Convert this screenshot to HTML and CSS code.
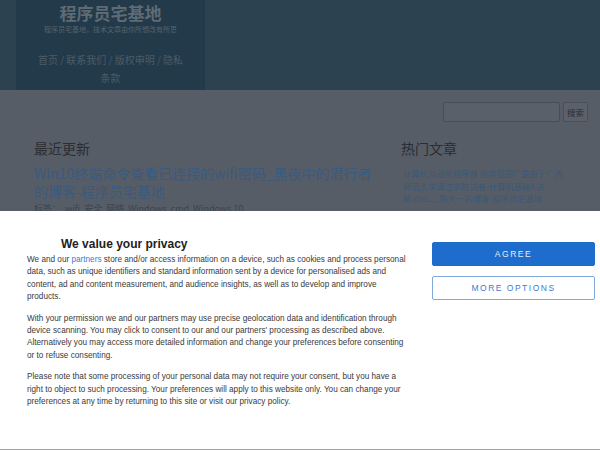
FILE: index.html
```html
<!DOCTYPE html>
<html lang="zh">
<head>
<meta charset="utf-8">
<title>程序员宅基地</title>
<link rel="stylesheet" href="styles.css">
</head>
<body>
<header class="site-header">
  <div class="brand-box">
    <div class="site-title">程序员宅基地</div>
    <div class="site-desc">程序员宅基地，技术文章由你所想改有所思</div>
    <nav class="site-nav">首页 / 联系我们 / 版权申明 / 隐私条款</nav>
  </div>
</header>
<div class="search-row">
  <input class="search-input" type="text">
  <button class="search-btn">搜索</button>
</div>
<main class="content">
  <section class="main-col">
    <h2 class="col-title">最近更新</h2>
    <a class="post-title">Win10终端命令查看已连接的wifi密码_黑夜中的潜行者的博客-程序员宅基地</a>
    <div class="post-tags">标签： &nbsp;wifi&nbsp; 安全&nbsp; 网络&nbsp; Windows&nbsp; cmd&nbsp; Windows 10</div>
  </section>
  <aside class="side-col">
    <h2 class="col-title">热门文章</h2>
    <a class="hot-link">计算机自动化程序器 应用范围广是由于广西师范大学漓江学院试卷-计算机基础A讲解.doc..._陈大一的博客-程序员宅基地</a>
  </aside>
</main>
<div class="consent">
  <div class="consent-text">
    <h3 class="consent-title">We value your privacy</h3>
    <p>We and our <a class="partners">partners</a> store and/or access information on a device, such as cookies and process personal data, such as unique identifiers and standard information sent by a device for personalised ads and content, ad and content measurement, and audience insights, as well as to develop and improve products.</p>
    <p>With your permission we and our partners may use precise geolocation data and identification through device scanning. You may click to consent to our and our partners' processing as described above. Alternatively you may access more detailed information and change your preferences before consenting or to refuse consenting.</p>
    <p>Please note that some processing of your personal data may not require your consent, but you have a right to object to such processing. Your preferences will apply to this website only. You can change your preferences at any time by returning to this site or visit our privacy policy.</p>
  </div>
  <div class="consent-actions">
    <button class="btn btn-agree">AGREE</button>
    <button class="btn btn-more">MORE OPTIONS</button>
  </div>
</div>
</body>
</html>
```
FILE: styles.css
```css
* { box-sizing: border-box; }
html, body { margin: 0; padding: 0; }
body {
  background: #575d67;
  font-family: "Noto Sans CJK SC", "Noto Sans", sans-serif;
  width: 600px;
  height: 450px;
  overflow: hidden;
}
.site-header {
  height: 90px;
  background: #2c4250;
}
.brand-box {
  margin-left: 16px;
  width: 189px;
  height: 90px;
  background: #223a4a;
  text-align: center;
  padding: 2px 0 0;
}
.site-title {
  font-size: 17px;
  line-height: 22px;
  font-weight: bold;
  color: #5f6b74;
}
.site-desc {
  font-size: 7px;
  line-height: 10px;
  color: #56636d;
  white-space: nowrap;
}
.site-nav {
  width: 152px;
  margin: 17px auto 0;
  font-size: 10px;
  line-height: 18px;
  color: #4a5c69;
}
.search-row {
  display: flex;
  justify-content: flex-end;
  gap: 3px;
  padding: 12px 12px 0 0;
  height: 32px;
}
.search-input {
  width: 117px;
  height: 20px;
  margin: 0;
  background: #5a606a;
  border: 1px solid #474d56;
  border-radius: 2px;
}
.search-btn {
  width: 25px;
  height: 20px;
  margin: 0;
  padding: 0;
  font-family: "Noto Sans CJK SC", sans-serif;
  font-size: 8.5px;
  color: #2a2e33;
  background: #5b616b;
  border: 1px solid #4a5059;
  border-radius: 2px;
}
.content {
  display: grid;
  grid-template-columns: 342px 164px;
  column-gap: 25px;
  padding: 17px 0 0 34px;
}
.col-title {
  margin: 0;
  font-size: 14px;
  line-height: 18px;
  font-weight: normal;
  color: #2a2d32;
}
.post-title {
  display: block;
  margin-top: 7px;
  font-size: 14px;
  line-height: 18px;
  color: #3a5a7e;
}
.post-tags {
  margin-top: 3px;
  font-size: 9px;
  line-height: 12px;
  color: #3a4450;
}
.hot-link {
  display: block;
  margin-top: 10px;
  padding-left: 2px;
  font-size: 8.3px;
  line-height: 12.5px;
  color: #3b5877;
}
.consent {
  position: fixed;
  left: 0;
  right: 0;
  bottom: 0;
  height: 239px;
  background: #fff;
  border-bottom: 1px solid #a3a3a3;
  display: flex;
  padding: 25px 5px 0 27px;
  font-family: "Liberation Sans", Arial, sans-serif;
}
.consent-text {
  width: 382px;
}
.consent-title {
  margin: 0 0 2px;
  padding-left: 34px;
  font-size: 12px;
  line-height: 16px;
  font-weight: bold;
  color: #222;
}
.consent-text p {
  margin: 0 0 9px;
  font-size: 8.2px;
  line-height: 12.4px;
  color: #3a3a3a;
}
.partners { color: #3a7bd5; }
.consent-actions {
  margin-left: auto;
  width: 163px;
  display: flex;
  flex-direction: column;
  gap: 10px;
  padding-top: 6px;
}
.btn {
  height: 24px;
  margin: 0;
  font-family: "Liberation Sans", Arial, sans-serif;
  font-size: 8.5px;
  letter-spacing: 1.5px;
  border-radius: 2px;
}
.btn-agree {
  background: #1e6dcc;
  border: 1px solid #1e6dcc;
  color: #e4ecf7;
}
.btn-more {
  background: #fff;
  border: 1px solid #7ea8de;
  color: #3d7bd0;
}
```
